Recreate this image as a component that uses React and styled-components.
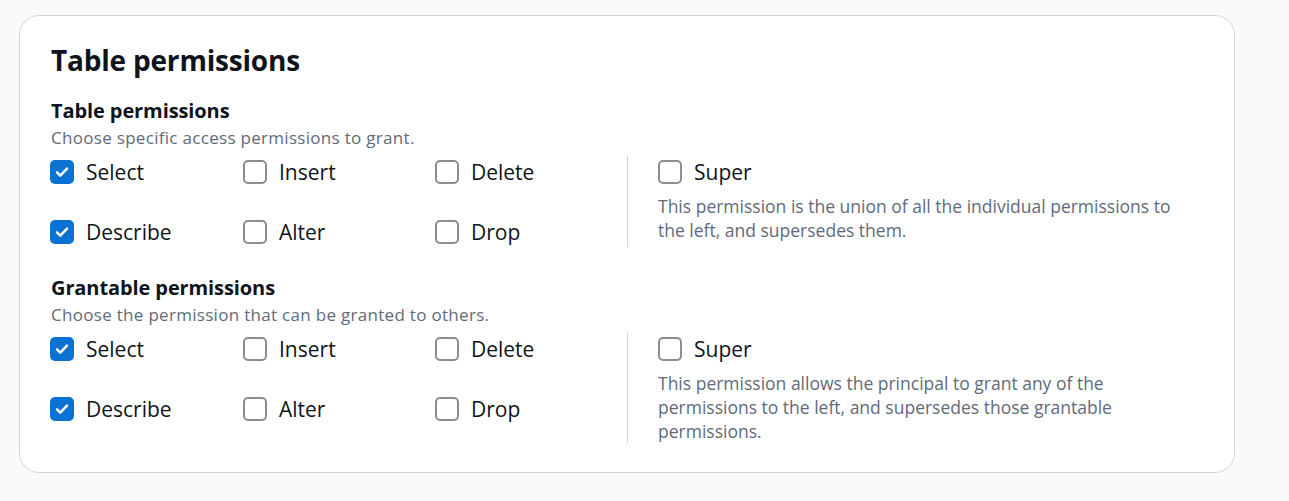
import React from "react";
import styled, { createGlobalStyle } from "styled-components";

const GlobalStyle = createGlobalStyle`
  body {
    margin: 0;
    background: #fafafa;
    font-family: "Open Sans", "Noto Sans", sans-serif;
    color: #0f141a;
  }
`;

const sections = [
  {
    title: "Table permissions",
    desc: "Choose specific access permissions to grant.",
    superDesc:
      "This permission is the union of all the individual permissions to the left, and supersedes them.",
  },
  {
    title: "Grantable permissions",
    desc: "Choose the permission that can be granted to others.",
    superDesc:
      "This permission allows the principal to grant any of the permissions to the left, and supersedes those grantable permissions.",
  },
];

const options = ["Select", "Insert", "Delete", "Describe", "Alter", "Drop"];
const checkedByDefault = ["Select", "Describe"];

const CheckIcon = () => (
  <svg width="16" height="16" viewBox="0 0 16 16" fill="none">
    <path d="M3 8.4l3.3 3.3L13 4.6" stroke="#fff" strokeWidth="2.5" strokeLinecap="round" strokeLinejoin="round" />
  </svg>
);

const Checkbox = ({ label, checked }) => (
  <Option>
    <Box $checked={checked}>{checked && <CheckIcon />}</Box>
    <Label>{label}</Label>
  </Option>
);

export default function App() {
  return (
    <>
      <GlobalStyle />
      <Page>
        <Card>
          <Title>Table permissions</Title>
          {sections.map((s) => (
            <Section key={s.title}>
              <Heading>{s.title}</Heading>
              <Desc>{s.desc}</Desc>
              <Row>
                <OptionGrid>
                  {options.map((o) => (
                    <Checkbox key={o} label={o} checked={checkedByDefault.includes(o)} />
                  ))}
                </OptionGrid>
                <SuperPanel>
                  <Checkbox label="Super" checked={false} />
                  <SuperDesc>{s.superDesc}</SuperDesc>
                </SuperPanel>
              </Row>
            </Section>
          ))}
        </Card>
      </Page>
    </>
  );
}

const Page = styled.div`
  padding: 15px 54px 24px 19px;
`;

const Card = styled.div`
  background: #fff;
  border: 1px solid #d5d3dc;
  border-radius: 20px;
  padding: 26px 30px 29px 30px;
  width: 1216px;
  box-sizing: border-box;
`;

const Title = styled.h2`
  margin: 0 0 19px 1px;
  font-size: 28px;
  font-weight: 700;
  line-height: 36px;
  letter-spacing: -0.2px;
`;

const Section = styled.div`
  & + & {
    margin-top: 27px;
  }
`;

const Heading = styled.h3`
  margin: 0 0 0 1px;
  font-size: 20px;
  font-weight: 700;
  line-height: 28px;
  letter-spacing: -0.1px;
`;

const Desc = styled.p`
  margin: 0 0 4px 1px;
  font-size: 17px;
  line-height: 26px;
  letter-spacing: 0.3px;
  color: #5f6b7a;
`;

const Row = styled.div`
  display: flex;
  align-items: stretch;
`;

const OptionGrid = styled.div`
  display: grid;
  grid-template-columns: 193px 192px 192px;
  grid-auto-rows: 30px;
  row-gap: 30px;
  padding-top: 2px;
  align-self: flex-start;
`;

const SuperPanel = styled.div`
  border-left: 1px solid #d5d3dc;
  padding: 2px 0 0 30px;
  width: 540px;
`;

const Option = styled.label`
  display: flex;
  align-items: center;
  gap: 12px;
  height: 30px;
`;

const Box = styled.span`
  flex: none;
  width: 24px;
  height: 24px;
  box-sizing: border-box;
  border-radius: 5px;
  display: flex;
  align-items: center;
  justify-content: center;
  background: ${(p) => (p.$checked ? "#0972d3" : "#fff")};
  border: ${(p) => (p.$checked ? "none" : "2px solid #8c8c94")};
`;

const Label = styled.span`
  font-size: 21px;
  line-height: 26px;
  color: #0f141a;
`;

const SuperDesc = styled.p`
  margin: 7px 0 0;
  max-width: 532px;
  font-size: 17.5px;
  line-height: 24px;
  color: #5f6b7a;
`;
